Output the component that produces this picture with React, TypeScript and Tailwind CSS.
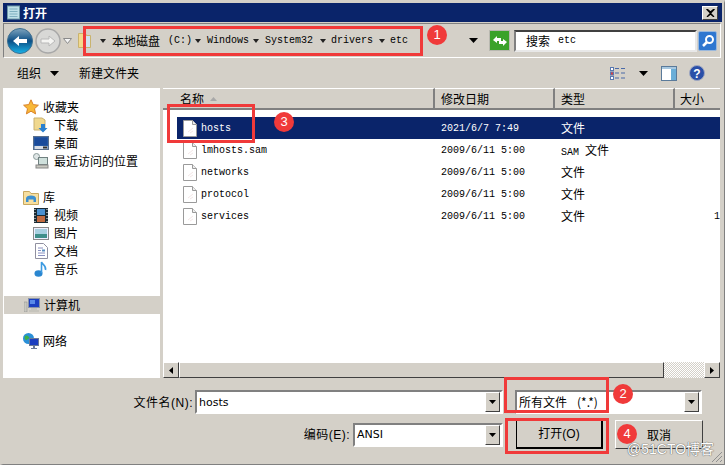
import React from "react";

const cjk = "font-['Noto_Sans_CJK_SC','Liberation_Sans',sans-serif]";
const mono = "font-['Liberation_Mono','Noto_Sans_CJK_SC',monospace]";
const tahoma = "font-['DejaVu_Sans',sans-serif]";
const raised = "border border-t-white border-l-white border-r-[#404040] border-b-[#404040] bg-[#d4d0c8]";
const sunken = "border-2 border-t-[#808080] border-l-[#808080] border-r-white border-b-white";

function Caret({ className = "" }: { className?: string }) {
  return (
    <svg width="9" height="5" viewBox="0 0 9 5" className={className}>
      <path d="M0 0h9L4.500 5z" fill="#000" />
    </svg>
  );
}

function Sm({ className = "" }: { className?: string }) {
  return (
    <svg width="6" height="4" viewBox="0 0 6 4" className={className}>
      <path d="M0 0h6L3 4z" fill="#222" />
    </svg>
  );
}

function FileIcon() {
  return (
    <svg width="14" height="17" viewBox="0 0 14 17" className="shrink-0">
      <path d="M.5.5h9l4 4v12H.5z" fill="#fff" stroke="#9a9a9a" />
      <path d="M9.5.5v4h4" fill="#eee" stroke="#9a9a9a" />
      <path d="M5 12l5-4M7 13l3-2" stroke="#f3e6e6" />
    </svg>
  );
}

function DropBtn() {
  return (
    <div className={`${raised} w-[15px] h-[20px] flex items-center justify-center shrink-0`}>
      <svg width="7" height="4" viewBox="0 0 7 4"><path d="M0 0h7L3.500 4z" fill="#000" /></svg>
    </div>
  );
}

function Badge({ n, className }: { n: string; className: string }) {
  return (
    <div className={`absolute w-5 h-5 rounded-full bg-[#f03a3a] text-white text-[13px] flex items-center justify-center font-['Liberation_Sans',sans-serif] ${className}`}>
      {n}
    </div>
  );
}

function NavIcon({ kind }: { kind: string }) {
  const c = "shrink-0";
  switch (kind) {
    case "star":
      return (
        <svg width="16" height="16" viewBox="0 0 16 16" className={c}>
          <path d="M8 .8l2.2 4.8 5.2.6-3.9 3.5 1.1 5.2L8 12.2 3.4 14.900l1.1-5.200L.6 6.200l5.200-.6z" fill="#f8b838" stroke="#d9822b" />
        </svg>
      );
    case "download":
      return (
        <svg width="16" height="16" viewBox="0 0 16 16" className={c}>
          <path d="M1 1h8l3 2v10H1z" fill="#f0d88e" stroke="#c8b070" />
          <path d="M8 7h4v4h2.500L10 15.500 5.500 11H8z" fill="#2a80d0" />
        </svg>
      );
    case "desktop":
      return (
        <svg width="16" height="14" viewBox="0 0 16 14" className={c}>
          <rect x=".5" y=".5" width="15" height="13" fill="#2f62a8" stroke="#5a6f8c" />
          <rect x="1.500" y="1.500" width="13" height="8" fill="#1a4a9a" />
          <rect x="1.500" y="10" width="13" height="3" fill="#d8dde4" />
          <rect x="10" y="10.500" width="4" height="2" fill="#333" />
        </svg>
      );
    case "recent":
      return (
        <svg width="16" height="16" viewBox="0 0 16 16" className={c}>
          <circle cx="3.500" cy="3.500" r="3" fill="#dfe6e6" stroke="#8a9a9a" />
          <rect x="5.500" y="4.500" width="9" height="7" fill="#cfe0dc" stroke="#708080" />
          <rect x="3" y="12" width="12" height="3" fill="#c8c8c0" stroke="#888" />
        </svg>
      );
    case "library":
      return (
        <svg width="16" height="15" viewBox="0 0 16 15" className={c}>
          <path d="M.5 1.500h6l1.500 2h7.500v11H.5z" fill="#f6dfa0" stroke="#c8a860" />
          <path d="M3 12V8.500C3 6.500 5 5.500 8 5.500s5 1 5 3V12h-2.500V9.500h-5V12z" fill="#3c8fd0" />
        </svg>
      );
    case "video":
      return (
        <svg width="14" height="15" viewBox="0 0 14 15" className={c}>
          <rect width="14" height="15" fill="#1a2a33" />
          <rect x="3" y="1" width="8" height="6" fill="#4a90d0" />
          <rect x="3" y="8" width="8" height="6" fill="#c06a40" />
          <path d="M1 1v1M1 4v1M1 7v1M1 10v1M1 13v1M13 1v1M13 4v1M13 7v1M13 10v1M13 13v1" stroke="#fff" />
        </svg>
      );
    case "picture":
      return (
        <svg width="16" height="13" viewBox="0 0 16 13" className={c}>
          <rect x=".5" y=".5" width="15" height="12" fill="#eef" stroke="#8a8a8a" />
          <rect x="2" y="2" width="12" height="5" fill="#a8d0e0" />
          <rect x="2" y="7" width="12" height="4" fill="#3f8f8a" />
        </svg>
      );
    case "doc":
      return (
        <svg width="13" height="16" viewBox="0 0 13 16" className={c}>
          <path d="M.5.500h8l4 4v11H.500z" fill="#fff" stroke="#9090a0" />
          <path d="M3 5h5M3 7.500h3M3 10h7M3 12.500h7" stroke="#8a90c0" />
          <rect x="7" y="6.500" width="3" height="2" fill="#5a90c0" />
        </svg>
      );
    case "music":
      return (
        <svg width="14" height="16" viewBox="0 0 14 16" className={c}>
          <ellipse cx="4.500" cy="12.500" rx="4" ry="3.200" fill="#2a86d0" />
          <path d="M7.500 12V1c1 3 5 3.500 4 8" fill="none" stroke="#3c9ae0" strokeWidth="1.600" />
        </svg>
      );
    case "computer":
      return (
        <svg width="16" height="14" viewBox="0 0 16 14" className={c}>
          <rect x="0" y="4" width="3" height="10" fill="#c8c8c0" stroke="#888" strokeWidth=".5" />
          <rect x="4.500" y=".5" width="11" height="9" fill="#1c3fc0" stroke="#8a94a8" />
          <rect x="6" y="2" width="5" height="4" fill="#5a8ae8" />
          <path d="M7 10.500h6v1H7zM5 12.500h10v1H5z" fill="#b8b8b0" />
        </svg>
      );
    default:
      return (
        <svg width="16" height="16" viewBox="0 0 16 16" className={c}>
          <circle cx="5.500" cy="5.500" r="5.500" fill="#2a90d8" />
          <path d="M2 3c2-1 3 0 4 1S4 7 3 7 1 4 2 3zM6 7c2 0 3 1 2 3L6 10z" fill="#3cb04a" />
          <rect x="6.500" y="5.500" width="9" height="7" fill="#1c3fc0" stroke="#6a7a98" />
          <path d="M10 13h2v2h-2zM8 15h6v1H8z" fill="#6a7a98" />
        </svg>
      );
  }
}

function NavItem({ icon, label, indent, active }: { icon: string; label: string; indent?: boolean; active?: boolean }) {
  return (
    <div className={`h-[18px] flex items-center text-[12px] text-black ${indent ? "pl-[30px] gap-[5px]" : "pl-[20px] gap-[4px]"} ${active ? "bg-[#d4d0c8] ml-[1px] pl-[19px]" : ""}`}>
      <div className="w-4 flex justify-center shrink-0"><NavIcon kind={icon} /></div>
      <span className="leading-none">{label}</span>
    </div>
  );
}

function Row({ name, date, type, size, selected }: { name: string; date: string; type: string; size?: string; selected?: boolean }) {
  return (
    <div className={`h-[22px] flex items-center shrink-0 ${selected ? "bg-[#0a246a] text-white" : "text-black"}`}>
      <div className="w-[264px] flex items-center pl-[6px] gap-[4px] shrink-0">
        <FileIcon />
        <span className={`${mono} text-[10px] pt-[1px]`}>{name}</span>
      </div>
      <div className={`${mono} w-[120px] text-[10px] pt-[1px] shrink-0`}>{date}</div>
      <div className="flex-1 text-[12px] whitespace-nowrap">
        {type === "SAM 文件" ? <><span className={`${mono} text-[10px]`}>SAM </span>文件</> : type}
      </div>
      {size && <div className={`${mono} text-[10px] pt-[1px] w-[6px] shrink-0`}>{size}</div>}
    </div>
  );
}

function Head({ label, className, children }: { label: string; className: string; children?: React.ReactNode }) {
  return (
    <div className={`h-[22px] flex items-center text-[12px] border-r-2 border-r-[#808080] border-b-2 border-b-[#808080] border-t border-t-white shrink-0 ${className}`}>
      <span>{label}</span>
      {children}
    </div>
  );
}

export default function App() {
  return (
    <div className={`relative w-[725px] h-[465px] overflow-hidden bg-[#d4d0c8] border-t-[3px] border-l-[3px] border-r border-b border-[#d4d0c8] border-r-[#808080] border-b-[#808080] pr-[2px] pb-[1px] ${cjk} flex flex-col`}>
      {/* Title bar */}
      <div className="h-[19px] bg-[#0a246a] flex items-center justify-between pl-[3px] pr-[4px] shrink-0">
        <div className="flex items-center gap-[2px]">
          <svg width="15" height="15" viewBox="0 0 15 15">
            <rect x="1.500" y="1" width="12" height="13" fill="#bfe0e8" stroke="#6f9aa8" />
            <path d="M3.500 4h8M3.500 6.500h8M3.500 9h8M3.500 11.500h8" stroke="#7fb0c0" />
          </svg>
          <span className="text-white text-[12px] font-bold leading-none">打开</span>
        </div>
        <div className={`${raised} w-[16px] h-[14px] flex items-center justify-center`}>
          <svg width="9" height="8" viewBox="0 0 9 8"><path d="M1 0l3.500 3L8 0M1 8l3.500-3L8 8M.5 0l7.500 8M8.500 0L1 8" stroke="#000" strokeWidth="1.200" fill="none" /></svg>
        </div>
      </div>

      {/* Address bar */}
      <div className="h-[35px] mt-[1px] border border-[#808080] border-b-white border-r-white flex items-center shrink-0 mr-[1px]">
        <div className="w-[3px]" />
        <svg width="26" height="26" viewBox="0 0 26 26" className="shrink-0">
          <defs>
            <linearGradient id="backGrad" x1="0" y1="0" x2="0" y2="1">
              <stop offset="0" stopColor="#7fa4bd" />
              <stop offset=".5" stopColor="#0c4f86" />
              <stop offset="1" stopColor="#18b4ea" />
            </linearGradient>
          </defs>
          <circle cx="13" cy="13" r="12.500" fill="url(#backGrad)" stroke="#3c6e90" />
          <path d="M6 13l6-5v3h8v4h-8v3z" fill="#fff" />
        </svg>
        <svg width="26" height="26" viewBox="0 0 26 26" className="shrink-0 ml-[2px]">
          <circle cx="13" cy="13" r="12" fill="#d8d8d6" stroke="#a8a8a8" strokeWidth="1.500" />
          <path d="M20 13l-6-5v3H6v4h8v3z" fill="#f4f4f2" stroke="#b8b8b8" />
        </svg>
        <svg width="9" height="6" viewBox="0 0 9 6" className="ml-[2px] shrink-0"><path d="M.5.500h8L4.500 5.500z" fill="#f4f4f4" stroke="#8a8a8a" /></svg>
        <div className="ml-[6px] w-[340px] h-[22px] flex items-center shrink-0">
          <svg width="13" height="17" viewBox="0 0 13 17" className="shrink-0">
            <path d="M.5 1.500h7l1 2h4v12H.5z" fill="#f2d98e" stroke="#c9b36e" />
            <rect x="8" y="4" width="4" height="11" fill="#cfe3ee" />
          </svg>
          <Sm className="ml-[9px] shrink-0" />
          <span className="ml-[6px] text-[12px] whitespace-nowrap">本地磁盘</span>
          <span className={`${mono} text-[10px] ml-[8px] whitespace-nowrap`}>(C:)</span>
          <Sm className="ml-[3px] shrink-0" />
          <span className={`${mono} text-[10px] ml-[6px]`}>Windows</span>
          <Sm className="ml-[4px] shrink-0" />
          <span className={`${mono} text-[10px] ml-[6px]`}>System32</span>
          <Sm className="ml-[7px] shrink-0" />
          <span className={`${mono} text-[10px] ml-[5px]`}>drivers</span>
          <Sm className="ml-[6px] shrink-0" />
          <span className={`${mono} text-[10px] ml-[5px]`}>etc</span>
        </div>
        <div className="flex-1 flex justify-end pr-[11px]"><Caret /></div>
        <div className="w-[21px] h-[21px] border border-[#b8b8b0] bg-[#3aa22a] flex items-center justify-center shrink-0">
          <svg width="16" height="14" viewBox="0 0 16 14">
            <path d="M1 6l4-4v2h4v3H5v2zM15 8l-4 4v-2H7V7h4V5z" fill="#fff" />
          </svg>
        </div>
        <div className="ml-[4px] w-[183px] h-[22px] bg-white border-2 border-t-[#404040] border-l-[#808080] border-r-[#e8e8e8] border-b-[#e8e8e8] flex items-center pl-[10px] shrink-0">
          <span className="text-[12px]">搜索</span>
          <span className={`${mono} text-[10px] ml-[8px]`}>etc</span>
        </div>
        <div className="ml-[1px] mr-[3px] w-[19px] h-[20px] bg-[#2f77d0] border border-[#9ab8dc] rounded-[2px] flex items-center justify-center shrink-0">
          <svg width="14" height="14" viewBox="0 0 14 14">
            <circle cx="8.500" cy="5.500" r="3.500" fill="none" stroke="#fff" strokeWidth="2" />
            <path d="M6 8l-4 4" stroke="#fff" strokeWidth="2.500" />
          </svg>
        </div>
      </div>

      {/* Toolbar */}
      <div className="h-[30px] flex items-center text-[12px] shrink-0">
        <span className="ml-[14px]">组织</span>
        <Caret className="ml-[9px]" />
        <span className="ml-[20px]">新建文件夹</span>
        <div className="flex-1" />
        <svg width="16" height="13" viewBox="0 0 16 13">
          <rect x=".5" y=".5" width="3" height="3" fill="#fff" stroke="#5a78b0" />
          <rect x=".5" y="5" width="3" height="3" fill="#d84040" stroke="#5a78b0" />
          <rect x=".5" y="9.500" width="3" height="3" fill="#fff" stroke="#5a78b0" />
          <path d="M5 1.500h4M11 1.500h4M5 6h4M11 6h4M5 11h4M11 11h4" stroke="#4a6aa8" />
        </svg>
        <Caret className="ml-[13px]" />
        <svg width="16" height="15" viewBox="0 0 16 15" className="ml-[13px]">
          <rect x=".5" y=".5" width="15" height="14" fill="#fff" stroke="#5a7a9a" />
          <rect x="1" y="1" width="14" height="2" fill="#a8c8e0" />
          <rect x="10" y="3" width="5" height="11" fill="#6aaed8" />
        </svg>
        <svg width="16" height="16" viewBox="0 0 16 16" className="ml-[12px] mr-[17px]">
          <circle cx="8" cy="8" r="7.500" fill="#2a4fa8" stroke="#a0a8c0" />
          <text x="8" y="12.500" fontSize="12" fontWeight="bold" fill="#fff" textAnchor="middle" fontFamily="Liberation Sans">?</text>
        </svg>
      </div>

      {/* Main */}
      <div className="flex h-[290px] shrink-0">
        <div className="w-[157px] bg-white shrink-0 pt-[10px] flex flex-col overflow-hidden">
          <NavItem icon="star" label="收藏夹" />
          <NavItem icon="download" label="下载" indent />
          <NavItem icon="desktop" label="桌面" indent />
          <NavItem icon="recent" label="最近访问的位置" indent />
          <div className="h-[18px]" />
          <NavItem icon="library" label="库" />
          <NavItem icon="video" label="视频" indent />
          <NavItem icon="picture" label="图片" indent />
          <NavItem icon="doc" label="文档" indent />
          <NavItem icon="music" label="音乐" indent />
          <div className="h-[18px]" />
          <NavItem icon="computer" label="计算机" active />
          <div className="h-[18px]" />
          <NavItem icon="network" label="网络" />
        </div>
        <div className="w-[3px] shrink-0" />
        <div className="flex-1 flex flex-col bg-white min-w-0 mr-[2px]">
          <div className="flex bg-[#d4d0c8] shrink-0">
            <Head label="名称" className="w-[272px] pl-[17px] gap-[6px]">
              <svg width="7" height="4" viewBox="0 0 7 4"><path d="M0 4h7L3.500 0z" fill="#a8a8a8" /></svg>
            </Head>
            <Head label="修改日期" className="w-[120px] pl-[6px]" />
            <Head label="类型" className="w-[120px] pl-[6px]" />
            <div className="flex-1 h-[22px] flex items-center text-[12px] pl-[5px] border-t border-t-white border-b-2 border-b-[#808080]">大小</div>
          </div>
          <div className="flex-1 flex flex-col pt-[7px] pl-[14px] overflow-hidden">
            <Row name="hosts" date="2021/6/7 7:49" type="文件" selected />
            <Row name="lmhosts.sam" date="2009/6/11 5:00" type="SAM 文件" />
            <Row name="networks" date="2009/6/11 5:00" type="文件" />
            <Row name="protocol" date="2009/6/11 5:00" type="文件" />
            <Row name="services" date="2009/6/11 5:00" type="文件" size="1" />
          </div>
          <div className="h-[16px] flex bg-[#d4d0c8] shrink-0">
            <div className={`${raised} w-[16px] flex items-center justify-center shrink-0`}>
              <svg width="4" height="7" viewBox="0 0 4 7"><path d="M4 0v7L0 3.500z" fill="#000" /></svg>
            </div>
            <div className={`${raised} flex-1`} />
            <div className="w-[40px] bg-[repeating-conic-gradient(#d4d0c8_0%_25%,#ffffff_0%_50%)] bg-[length:2px_2px] shrink-0" />
            <div className={`${raised} w-[16px] flex items-center justify-center shrink-0`}>
              <svg width="4" height="7" viewBox="0 0 4 7"><path d="M0 0v7l4-3.500z" fill="#000" /></svg>
            </div>
          </div>
        </div>
      </div>

      {/* Bottom form */}
      <div className="flex-1 flex flex-col text-[12px] pt-[12px] gap-[6px]">
        <div className="flex items-center h-[24px]">
          <div className="w-[192px] text-right pr-[2px] pt-[1px] tracking-[0.5px] font-['Liberation_Sans','Noto_Sans_CJK_SC',sans-serif]">文件名(N):</div>
          <div className={`${sunken} w-[308px] h-[24px] bg-white flex items-center justify-between pr-[1px] pl-[2px]`}>
            <span className={`${tahoma} text-[11px] pt-[2px]`}>hosts</span>
            <DropBtn />
          </div>
          <div className={`${sunken} ml-[12px] w-[187px] h-[24px] bg-white flex items-center justify-between pr-[1px] pl-[2px]`}>
            <span className="whitespace-nowrap">所有文件<span className="ml-[10px]">(*.*)</span></span>
            <DropBtn />
          </div>
        </div>
        <div className="flex items-center h-[29px]">
          <div className="w-[350px] text-right pr-[3px] tracking-[0.5px] font-['Liberation_Sans','Noto_Sans_CJK_SC',sans-serif]">编码(E):</div>
          <div className={`${sunken} w-[150px] h-[24px] bg-white flex items-center justify-between pr-[1px] pl-[2px]`}>
            <span className={`${tahoma} text-[11px] pt-[1px]`}>ANSI</span>
            <DropBtn />
          </div>
          <div className="ml-[13px] w-[87px] h-[29px] border border-black bg-[#d4d0c8] flex items-center justify-center border-r-2 border-b-2 font-['Liberation_Sans','Noto_Sans_CJK_SC',sans-serif]">打开(O)</div>
          <div className={`${raised} ml-[12px] w-[88px] h-[29px] flex items-center justify-center`}>取消</div>
        </div>
      </div>

      {/* Resize grip */}
      <svg width="12" height="12" viewBox="0 0 12 12" className="absolute right-[1px] bottom-[1px]">
        <path d="M11 1L1 11M11 5l-6 6M11 9l-2 2" stroke="#909090" />
      </svg>

      {/* Annotations */}
      <div className="absolute left-[80px] top-[23px] w-[340px] h-[30px] border-[3px] border-[#f03a3a]" />
      <Badge n="1" className="left-[424px] top-[22px]" />
      <div className="absolute left-[164px] top-[101px] w-[88px] h-[39px] border-[3px] border-[#f03a3a]" />
      <Badge n="3" className="left-[271px] top-[109px]" />
      <div className="absolute left-[501px] top-[374px] w-[105px] h-[36px] border-[3px] border-[#f03a3a]" />
      <Badge n="2" className="left-[610px] top-[381px]" />
      <div className="absolute left-[502px] top-[415px] w-[104px] h-[36px] border-[3px] border-[#f03a3a]" />
      <Badge n="4" className="left-[614px] top-[421px]" />
      <div className="absolute left-[624px] top-[439px] text-[14px] text-white font-['Liberation_Sans','Noto_Sans_CJK_SC',sans-serif] leading-none whitespace-nowrap [text-shadow:0_0_1px_#555,0_0_1px_#555]">@51CTO博客</div>
    </div>
  );
}
